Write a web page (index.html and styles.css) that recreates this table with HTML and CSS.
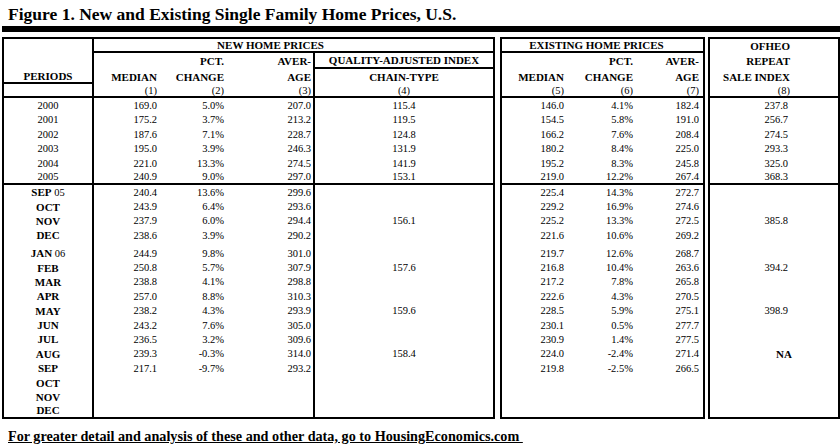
FILE: index.html
```html
<!DOCTYPE html>
<html>
<head>
<meta charset="utf-8">
<link rel="stylesheet" href="styles.css">
</head>
<body>
<div class="page">
  <h1 class="title">Figure 1. New and Existing Single Family Home Prices, U.S.</h1>
  <div class="bar"></div>
  <div class="sheet">
    <div class="band">
      <div class="b-per"></div>
      <div class="b-new">NEW HOME PRICES</div>
      <div class="b-exist">EXISTING HOME PRICES</div>
      <div class="b-ofheo">OFHEO</div>
    </div>
    <div class="row hd h2"><div></div><div></div><div>PCT.</div><div>AVER-</div><div class="ul">QUALITY-ADJUSTED INDEX</div><div></div><div>PCT.</div><div>AVER-</div><div>REPEAT</div></div>
    <div class="row hd h3"><div class="ul">PERIODS</div><div>MEDIAN</div><div>CHANGE</div><div>AGE</div><div>CHAIN-TYPE</div><div>MEDIAN</div><div>CHANGE</div><div>AGE</div><div>SALE INDEX</div></div>
    <div class="row hd h4 rule"><div></div><div class="n">(1)</div><div class="n">(2)</div><div class="n">(3)</div><div class="n">(4)</div><div class="n">(5)</div><div class="n">(6)</div><div class="n">(7)</div><div class="n">(8)</div></div>

    <div class="row yr"><div>2000</div><div>169.0</div><div>5.0%</div><div>207.0</div><div>115.4</div><div>146.0</div><div>4.1%</div><div>182.4</div><div>237.8</div></div>
    <div class="row yr"><div>2001</div><div>175.2</div><div>3.7%</div><div>213.2</div><div>119.5</div><div>154.5</div><div>5.8%</div><div>191.0</div><div>256.7</div></div>
    <div class="row yr"><div>2002</div><div>187.6</div><div>7.1%</div><div>228.7</div><div>124.8</div><div>166.2</div><div>7.6%</div><div>208.4</div><div>274.5</div></div>
    <div class="row yr"><div>2003</div><div>195.0</div><div>3.9%</div><div>246.3</div><div>131.9</div><div>180.2</div><div>8.4%</div><div>225.0</div><div>293.3</div></div>
    <div class="row yr"><div>2004</div><div>221.0</div><div>13.3%</div><div>274.5</div><div>141.9</div><div>195.2</div><div>8.3%</div><div>245.8</div><div>325.0</div></div>
    <div class="row yr rule"><div>2005</div><div>240.9</div><div>9.0%</div><div>297.0</div><div>153.1</div><div>219.0</div><div>12.2%</div><div>267.4</div><div>368.3</div></div>

    <div class="row mo"><div><b>SEP</b>&nbsp;05</div><div>240.4</div><div>13.6%</div><div>299.6</div><div></div><div>225.4</div><div>14.3%</div><div>272.7</div><div></div></div>
    <div class="row mo"><div><b>OCT</b></div><div>243.9</div><div>6.4%</div><div>293.6</div><div></div><div>229.2</div><div>16.9%</div><div>274.6</div><div></div></div>
    <div class="row mo"><div><b>NOV</b></div><div>237.9</div><div>6.0%</div><div>294.4</div><div>156.1</div><div>225.2</div><div>13.3%</div><div>272.5</div><div>385.8</div></div>
    <div class="row mo"><div><b>DEC</b></div><div>238.6</div><div>3.9%</div><div>290.2</div><div></div><div>221.6</div><div>10.6%</div><div>269.2</div><div></div></div>
    <div class="row gap"><div></div><div></div><div></div><div></div><div></div><div></div><div></div><div></div><div></div></div>
    <div class="row mo"><div><b>JAN</b>&nbsp;06</div><div>244.9</div><div>9.8%</div><div>301.0</div><div></div><div>219.7</div><div>12.6%</div><div>268.7</div><div></div></div>
    <div class="row mo"><div><b>FEB</b></div><div>250.8</div><div>5.7%</div><div>307.9</div><div>157.6</div><div>216.8</div><div>10.4%</div><div>263.6</div><div>394.2</div></div>
    <div class="row mo"><div><b>MAR</b></div><div>238.8</div><div>4.1%</div><div>298.8</div><div></div><div>217.2</div><div>7.8%</div><div>265.8</div><div></div></div>
    <div class="row mo"><div><b>APR</b></div><div>257.0</div><div>8.8%</div><div>310.3</div><div></div><div>222.6</div><div>4.3%</div><div>270.5</div><div></div></div>
    <div class="row mo"><div><b>MAY</b></div><div>238.2</div><div>4.3%</div><div>293.9</div><div>159.6</div><div>228.5</div><div>5.9%</div><div>275.1</div><div>398.9</div></div>
    <div class="row mo"><div><b>JUN</b></div><div>243.2</div><div>7.6%</div><div>305.0</div><div></div><div>230.1</div><div>0.5%</div><div>277.7</div><div></div></div>
    <div class="row mo"><div><b>JUL</b></div><div>236.5</div><div>3.2%</div><div>309.6</div><div></div><div>230.9</div><div>1.4%</div><div>277.5</div><div></div></div>
    <div class="row mo"><div><b>AUG</b></div><div>239.3</div><div>-0.3%</div><div>314.0</div><div>158.4</div><div>224.0</div><div>-2.4%</div><div>271.4</div><div><b class="na">NA</b></div></div>
    <div class="row mo"><div><b>SEP</b></div><div>217.1</div><div>-9.7%</div><div>293.2</div><div></div><div>219.8</div><div>-2.5%</div><div>266.5</div><div></div></div>
    <div class="row mo"><div><b>OCT</b></div><div></div><div></div><div></div><div></div><div></div><div></div><div></div><div></div></div>
    <div class="row mo"><div><b>NOV</b></div><div></div><div></div><div></div><div></div><div></div><div></div><div></div><div></div></div>
    <div class="row mo rule"><div><b>DEC</b></div><div></div><div></div><div></div><div></div><div></div><div></div><div></div><div></div></div>
  </div>
  <p class="foot"><span class="link">For greater detail and analysis of these and other data, go to HousingEconomics.com&nbsp;</span></p>
</div>
</body>
</html>
```
FILE: styles.css
```css
html, body { margin: 0; padding: 0; background: #fff; }
body { width: 840px; height: 448px; overflow: hidden; font-family: "Liberation Serif", "Times New Roman", serif; color: #000; }
.page { width: 840px; }
.title { margin: 4px 0 0 8px; font-size: 17.5px; line-height: 20px; font-weight: bold; }
.bar { margin: 2px 0 0 2px; height: 6px; background: #000; }
.sheet { margin: 5px 0 0 2px; width: 838px; }

.band, .row {
  display: grid;
  grid-template-columns: 92px 66px 67px 88px 180px 5px 67px 69px 69px 3px 132px;
}
.band > *, .row > * {
  box-sizing: border-box;
  display: flex;
  align-items: center;
  justify-content: flex-end;
  border: 0 solid #000;
  white-space: nowrap;
  overflow: visible;
}

/* header band (row 1) */
.band { height: 15px; font-size: 11px; font-weight: bold; }
.band > * { border-top-width: 2px; }
.b-per { grid-column: 1; border-left-width: 2px !important; border-right-width: 2px !important; }
.b-new { grid-column: 2 / 6; justify-content: center !important; padding-right: 46px; border-right-width: 2px !important; border-bottom-width: 2px !important; }
.b-exist { grid-column: 7 / 10; justify-content: center !important; padding-right: 12px; border-left-width: 2px !important; border-right-width: 2px !important; border-bottom-width: 2px !important; }
.b-ofheo { grid-column: 11; padding-right: 48px; border-left-width: 2px !important; border-right-width: 2px !important; }

/* generic row column rules */
.row > :nth-child(1) { border-left-width: 2px; border-right-width: 2px; justify-content: center; }
.row > :nth-child(2) { padding-right: 3px; }
.row > :nth-child(3) { padding-right: 3px; }
.row > :nth-child(4) { padding-right: 2px; border-right-width: 2px; }
.row > :nth-child(5) { border-right-width: 2px; justify-content: center; }
.row > :nth-child(6) { grid-column: 7; border-left-width: 2px; padding-right: 3px; }
.row > :nth-child(7) { padding-right: 3px; }
.row > :nth-child(8) { padding-right: 4px; border-right-width: 2px; }
.row > :nth-child(9) { grid-column: 11; border-left-width: 2px; border-right-width: 2px; padding-right: 50px; }

.row.rule > * { border-bottom-width: 2px; }
.row > .ul { border-bottom-width: 2px; }

/* header rows */
.hd { font-size: 11px; font-weight: bold; }
.hd > :nth-child(9) { padding-right: 48px; }
.h2 { height: 17px; }
.h3 { height: 15px; }
.h4 { height: 14px; }
.hd .n { font-weight: normal; font-size: 10.5px; }

/* body rows */
.yr { height: 14.5px; font-size: 10.5px; }
.mo { height: 14.4px; font-size: 10.5px; }
.mo > :nth-child(1) b { font-size: 11px; }
.gap { height: 3.4px; }
.na { margin-right: -4px; font-size: 11px; }

.foot { margin: 9px 0 0 8px; font-size: 14.2px; line-height: 16px; font-weight: bold; }
.link { text-decoration: underline; }
```
